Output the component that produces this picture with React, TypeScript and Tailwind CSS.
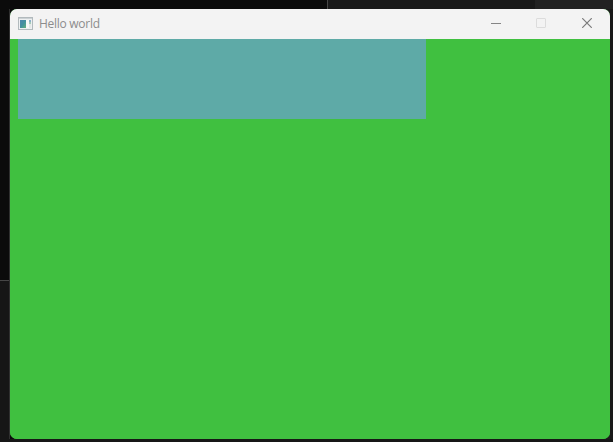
function AppIcon() {
  return (
    <svg className="mb-px" width="16" height="13" viewBox="0 0 16 13" shapeRendering="crispEdges">
      <defs>
        <linearGradient id="pane" x1="0" y1="0" x2="1" y2="1">
          <stop offset="0" stopColor="#4f86ad" />
          <stop offset="0.5" stopColor="#4390a0" />
          <stop offset="1" stopColor="#63b37c" />
        </linearGradient>
      </defs>
      <rect x="0.5" y="0.5" width="14" height="12" fill="#edf0f1" stroke="#b2babd" />
      <rect x="1" y="1" width="13" height="1" fill="#cbd1d4" />
      <rect x="2" y="3" width="6" height="8" fill="url(#pane)" />
      <rect x="8" y="3" width="3" height="8" fill="#f8f8f8" />
      <rect x="11" y="3" width="2" height="2" fill="#8bb0c9" />
      <rect x="11" y="5" width="2" height="2" fill="#a5cbb9" />
      <rect x="11" y="7" width="2" height="4" fill="#e4e8e8" />
    </svg>
  );
}

function TitleBar() {
  return (
    <header className="flex h-[30px] shrink-0 items-center bg-[#f3f3f3] pl-2 pb-px text-[#8c8c8c]">
      <AppIcon />
      <span className="ml-[5px] whitespace-nowrap font-['Open_Sans',sans-serif] text-[12px] leading-4 tracking-[-0.28px]">
        Hello world
      </span>
      <div className="ml-auto flex h-full pb-px">
        <button aria-label="Minimize" className="flex w-[46px] items-center justify-center">
          <svg width="10" height="10" viewBox="0 0 10 10" shapeRendering="crispEdges">
            <path d="M0 5.5H10" stroke="#858585" />
          </svg>
        </button>
        <button aria-label="Maximize" disabled className="mr-px flex w-[44px] items-center justify-center">
          <svg width="10" height="10" viewBox="0 0 10 10" fill="none">
            <rect x="0.5" y="0.5" width="9" height="9" rx="0.5" stroke="#dcdcdc" />
          </svg>
        </button>
        <button aria-label="Close" className="flex w-[46px] items-center justify-center">
          <svg width="10" height="10" viewBox="0 0 10 10">
            <path d="M0.2 0.2L9.8 9.8M9.8 0.2L0.2 9.8" stroke="#7b7b7b" strokeWidth="1.2" />
          </svg>
        </button>
      </div>
    </header>
  );
}

export default function App() {
  return (
    <div className="flex h-[442px] w-[613px] flex-col overflow-hidden bg-[#161616]">
      <div className="flex h-[9px] shrink-0">
        <div className="w-[327px] bg-[#0b0b0b]" />
        <div className="w-px bg-[#464646]" />
        <div className="w-[207px] bg-[#191919]" />
        <div className="flex-1 bg-[#222222]" />
      </div>
      <div className="flex h-[430px] shrink-0 bg-[linear-gradient(to_right,#0b0b0b_50%,#1c1c1c_50%)]">
        <div className="flex w-[10px] shrink-0 flex-col border-r border-[#303030] bg-[#161616]">
          <div className="h-[271px] bg-[#0b0b0b]" />
          <div className="h-px bg-[#464646]" />
        </div>
        <main className="flex w-[600px] flex-col overflow-hidden rounded-[7px] bg-[#40c040]">
          <TitleBar />
          <div className="flex-1 bg-[#40c040] pl-2">
            <div className="h-20 w-[408px] bg-[#5eaaa7]" />
          </div>
        </main>
        <div className="flex-1 bg-[#1a1a1a]" />
      </div>
    </div>
  );
}
